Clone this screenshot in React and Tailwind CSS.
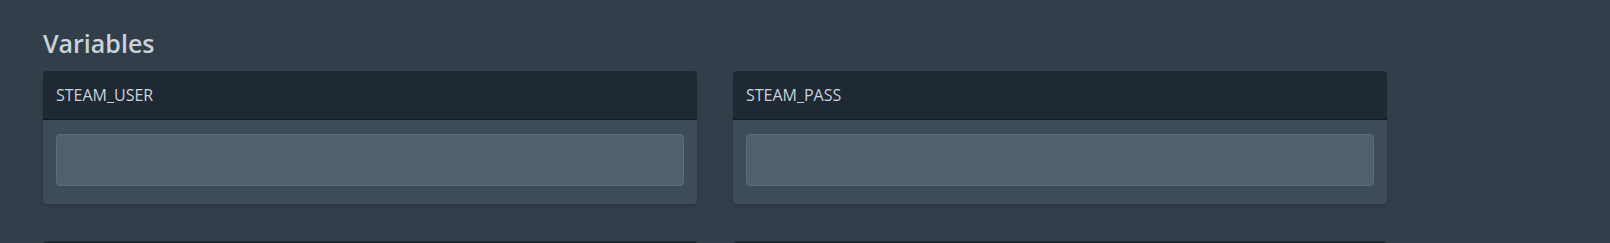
import React from "react";

const variables = [{ name: "STEAM_USER" }, { name: "STEAM_PASS" }];

const VariableCard = ({ name }) => (
  <div className="w-[654px] rounded bg-[#3e4c59] shadow-md">
    <div className="flex h-[49px] items-center rounded-t border-b border-[#131a20] bg-[#1f2933] px-[13px]">
      <p className="text-[16px] text-[#cbd2d9]">{name}</p>
    </div>
    <div className="px-[13px] pt-[14px] pb-[18px]">
      <input
        type="text"
        className="block h-[52px] w-full rounded border border-[#606d7b] bg-[#52606d] px-3 text-sm text-[#cbd2d9] outline-none"
      />
    </div>
  </div>
);

export default function App() {
  return (
    <div
      className="min-h-screen bg-[#323f4b] pl-[43px] pt-[26px]"
      style={{ fontFamily: '"Open Sans", "Noto Sans", sans-serif' }}
    >
      <h2 className="mb-[10px] text-[25px] leading-[35px] font-semibold text-[#cbd2d9]">Variables</h2>
      <div className="grid grid-cols-[654px_654px] gap-x-[36px] gap-y-[37px]">
        {variables.map((v) => (
          <VariableCard key={v.name} name={v.name} />
        ))}
        {/* next row, only its top edge is in view */}
        <div className="h-[49px] w-[654px] rounded-t bg-[#1f2933]" />
        <div className="h-[49px] w-[654px] rounded-t bg-[#1f2933]" />
      </div>
    </div>
  );
}
